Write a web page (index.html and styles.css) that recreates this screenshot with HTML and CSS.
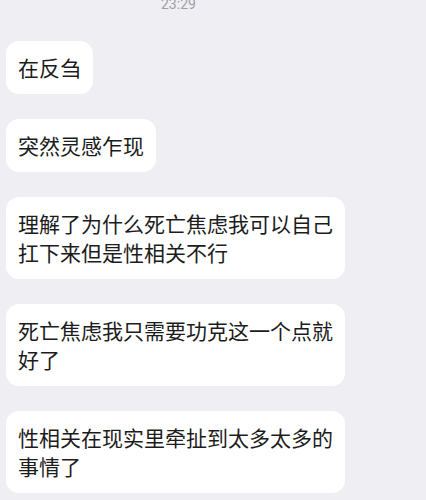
FILE: index.html
```html
<!DOCTYPE html>
<html lang="zh-CN">
<head>
<meta charset="UTF-8" />
<meta name="viewport" content="width=device-width, initial-scale=1" />
<title>聊天记录</title>
<link rel="stylesheet" href="styles.css">
</head>
<body>

<div class="chat">
  <div class="time">23:29</div>

  <div class="msg"><div class="bubble">在反刍</div></div>
  <div class="msg"><div class="bubble">突然灵感乍现</div></div>
  <div class="msg"><div class="bubble">理解了为什么死亡焦虑我可以自己扛下来但是性相关不行</div></div>
  <div class="msg"><div class="bubble">死亡焦虑我只需要功克这一个点就好了</div></div>
  <div class="msg"><div class="bubble">性相关在现实里牵扯到太多太多的事情了</div></div>
</div>

</body>
</html>
```

FILE: styles.css
```css
/* --- Reset & basics --- */
* {
  margin: 0; padding: 0; box-sizing: border-box;
}
body, html {
  height: 100%;
  overflow: hidden;
  background: #efeff3;
  font-family: 'Noto Sans CJK SC', 'Noto Sans', sans-serif;
}

/* --- Chat column --- */
.chat {
  display: flex;
  flex-direction: column;
  gap: 25px;
  padding: 0 6px;
}

.time {
  margin-top: -4px;
  margin-bottom: 4px;
  padding-left: 155px;
  font-family: 'Roboto', 'Noto Sans CJK SC', sans-serif;
  font-size: 14px;
  line-height: 16px;
  color: #a0a0a3;
}

/* --- Bubbles --- */
.msg {
  display: flex;
}
.bubble {
  max-width: 339px;
  padding: 12px 12px;
  background: #fff;
  border-radius: 13px;
  color: #1c1c1c;
  font-size: 21px;
  line-height: 29px;
}
```
